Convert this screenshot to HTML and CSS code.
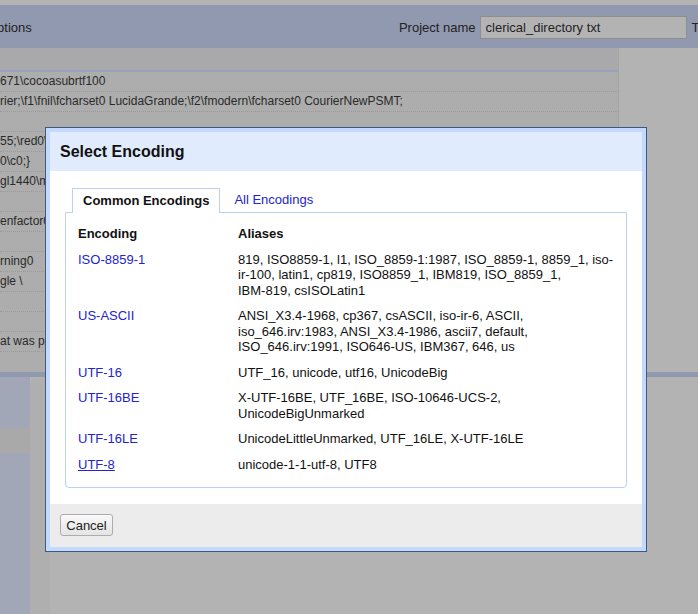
FILE: index.html
```html
<!DOCTYPE html>
<html>
<head>
<meta charset="utf-8">
<link rel="stylesheet" href="styles.css">
</head>
<body>
<div class="page">
  <div class="topstrip"></div>
  <div class="bar">
    <span class="bar-title">Options</span>
    <div class="project">
      <label class="project-label">Project name</label>
      <input class="project-input" type="text" value="clerical_directory txt">
      <span class="project-label">Tags</span>
    </div>
  </div>
  <div class="main">
    <div class="grid">
      <div class="grid-head"></div>
      <div class="row">671\cocoasubrtf100</div>
      <div class="row">rier;\f1\fnil\fcharset0 LucidaGrande;\f2\fmodern\fcharset0 CourierNewPSMT;</div>
      <div class="row"></div>
      <div class="row">55;\red0\green0\blue0;</div>
      <div class="row">0\c0;}</div>
      <div class="row">gl1440\margr1440</div>
      <div class="row"></div>
      <div class="row">enfactor0</div>
      <div class="row"></div>
      <div class="row">rning0</div>
      <div class="row">gle \</div>
      <div class="row"></div>
      <div class="row"></div>
      <div class="row">at was printed</div>
      <div class="row last"></div>
    </div>
    <div class="side"></div>
  </div>
  <div class="divider"></div>
  <div class="lower">
    <div class="lower-left">
      <div class="ll-a"></div>
      <div class="ll-b"></div>
      <div class="ll-c"></div>
    </div>
    <div class="lower-main"><div class="lower-panel"></div></div>
  </div>
</div>

<div class="dialog">
  <div class="dialog-title">Select Encoding</div>
  <div class="dialog-body">
    <div class="tabs">
      <div class="tab active">Common Encodings</div>
      <a class="tab link">All Encodings</a>
    </div>
    <div class="tab-panel">
      <table class="enc-table">
        <thead>
          <tr><th class="col-enc">Encoding</th><th>Aliases</th></tr>
        </thead>
        <tbody>
          <tr><td><a class="enc">ISO-8859-1</a></td><td>819, ISO8859-1, l1, ISO_8859-1:1987, ISO_8859-1, 8859_1, iso-ir-100, latin1, cp819, ISO8859_1, IBM819, ISO_8859_1, <span class="nw">IBM-819,</span> csISOLatin1</td></tr>
          <tr><td><a class="enc">US-ASCII</a></td><td>ANSI_X3.4-1968, cp367, csASCII, iso-ir-6, ASCII, iso_646.irv:1983, ANSI_X3.4-1986, ascii7, default, ISO_646.irv:1991, ISO646-US, IBM367, 646, us</td></tr>
          <tr><td><a class="enc">UTF-16</a></td><td>UTF_16, unicode, utf16, UnicodeBig</td></tr>
          <tr><td><a class="enc">UTF-16BE</a></td><td>X-UTF-16BE, UTF_16BE, ISO-10646-UCS-2, UnicodeBigUnmarked</td></tr>
          <tr><td><a class="enc">UTF-16LE</a></td><td>UnicodeLittleUnmarked, UTF_16LE, X-UTF-16LE</td></tr>
          <tr><td><a class="enc hover">UTF-8</a></td><td>unicode-1-1-utf-8, UTF8</td></tr>
        </tbody>
      </table>
    </div>
  </div>
  <div class="dialog-footer">
    <button class="btn">Cancel</button>
  </div>
</div>
</body>
</html>
```
FILE: styles.css
```css
* { box-sizing: border-box; }
html, body { margin: 0; padding: 0; }
body {
  width: 698px;
  height: 614px;
  overflow: hidden;
  background: #b3b3b3;
  font-family: "Liberation Sans", Arial, sans-serif;
  font-size: 13px;
  color: #1f1f1f;
  position: relative;
}
.page { width: 698px; height: 614px; overflow: hidden; }
.topstrip { height: 5px; background: #b3b3b3; }
.bar {
  height: 43px;
  padding-top: 1px;
  background: #9199b0;
  display: flex;
  align-items: center;
  white-space: nowrap;
}
.bar-title { margin-left: -13px; color: #222; font-size: 13px; }
.project { display: flex; align-items: center; gap: 4px; margin-left: auto; margin-right: -21px; }
.project-label { color: #222; }
.project-input {
  width: 207px;
  height: 23px;
  margin: 0 1px 0 0;
  padding: 0 5px;
  border: 1px solid #8e8e8e;
  background: #b3b3b3;
  font-family: "Liberation Sans", Arial, sans-serif;
  font-size: 13px;
  color: #242424;
}
.main { display: flex; height: 324px; }
.grid {
  width: 619px;
  background: #adadad;
  border-right: 1px solid #a4a4a4;
  font-size: 12px;
  color: #2a2a2a;
  white-space: nowrap;
  overflow: hidden;
}
.grid-head { height: 24px; background: #a9a9ab; border-bottom: 2px solid #98a1bd; }
.row {
  height: 20px;
  line-height: 19px;
  border-bottom: 1px dotted #999;
}
.row.last { border-bottom: none; }
.side { flex: 1; background: #b3b3b3; }
.divider { height: 5px; background: #9199b0; }
.lower { display: flex; height: 237px; }
.lower-left { width: 30px; display: flex; flex-direction: column; }
.ll-a { height: 51px; background: #a1a7b7; }
.ll-b { height: 25px; background: #a9a9a9; }
.ll-c { flex: 1; background: #a1a7b7; }
.lower-main { flex: 1; background: #b3b3b3; padding-top: 2px; }
.lower-panel { height: 100%; background: #afafaf; border-top-left-radius: 6px; width: 20px; }

/* dialog */
.dialog {
  position: absolute;
  left: 45px;
  top: 127px;
  width: 602px;
  height: 425px;
  border: 1px solid #3d5a7d;
  padding: 4px;
  background: #c3d9ff;
  display: flex;
  flex-direction: column;
}
.dialog-title {
  height: 39px;
  line-height: 39px;
  padding: 0 10px;
  background: #e0ebfd;
  font-size: 16px;
  font-weight: bold;
  color: #111;
}
.dialog-body {
  height: 333px;
  background: #fff;
  padding: 17px 15px 15px;
}
.tabs { display: flex; height: 25px; margin-bottom: -1px; position: relative; z-index: 1; }
.tab {
  height: 25px;
  line-height: 24px;
  padding: 0 10px;
  font-size: 13px;
}
.tab.active {
  margin-left: 7px;
  border: 1px solid #bcd0f7;
  border-bottom: none;
  background: #fff;
  font-weight: bold;
  color: #111;
}
.tab.link { margin-left: 4px; color: #2323cf; }
.tab-panel {
  height: 276px;
  border: 1px solid #bcd0f7;
  border-radius: 0 0 4px 4px;
  padding: 8px 7px 10px;
}
.enc-table { width: 100%; border-collapse: collapse; font-size: 13px; line-height: 15.5px; }
.enc-table th, .enc-table td {
  padding: 5px;
  text-align: left;
  vertical-align: top;
  color: #111;
}
.enc-table th { font-weight: bold; }
.col-enc { width: 160px; }
.nw { white-space: nowrap; }
.enc { color: #2323cf; text-decoration: none; }
.enc.hover { text-decoration: underline; }
.dialog-footer {
  flex: 1;
  background: #ececec;
  padding: 10px;
}
.btn {
  width: 53px;
  height: 22px;
  padding: 0;
  border: 1px solid #adadad;
  border-radius: 3px;
  background: linear-gradient(#f9f9f9, #e4e4e4);
  font-family: "Liberation Sans", Arial, sans-serif;
  font-size: 13px;
  color: #222;
}
```
